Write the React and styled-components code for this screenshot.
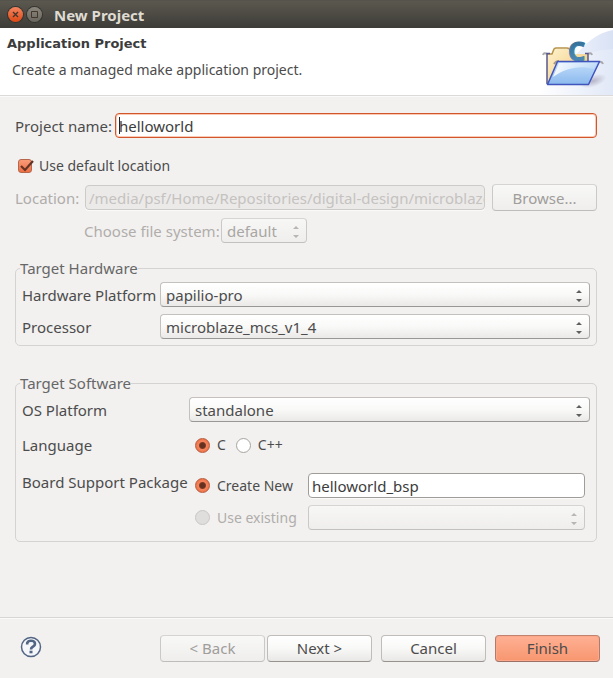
import React, { useState } from "react";
import styled, { createGlobalStyle, css } from "styled-components";

const GlobalStyle = createGlobalStyle`
  * { box-sizing: border-box; }
  body {
    margin: 0;
    background: #f2f1f0;
    color: #4c4c4c;
    font: 15px/18px "Noto Sans", sans-serif;
  }
  button, input, select { font: inherit; color: inherit; margin: 0; }
`;

const Dialog = styled.form`
  display: flex;
  flex-direction: column;
  min-height: 100vh;
`;

const TitleBar = styled.header`
  display: flex;
  align-items: center;
  height: 28px;
  padding: 0 8px;
  gap: 4px;
  background: linear-gradient(#5b584f, #3d3c37);
  border-top: 1px solid #55534b;
`;

const WindowButton = styled.button`
  display: flex;
  width: 15px;
  height: 15px;
  padding: 0;
  align-items: center;
  justify-content: center;
  border: 0;
  border-radius: 50%;
  color: #45352b;
  background: ${(p) => (p.$close ? "linear-gradient(#f58560, #dd4814)" : "linear-gradient(#8a877d, #68665e)")};
  box-shadow: 0 0 0 1px #35342f;
`;

const WindowTitle = styled.h1`
  margin: 0 0 0 8px;
  font-size: 15px;
  line-height: 18px;
  font-weight: 700;
  color: #dfdbd2;
`;

const Banner = styled.section`
  display: flex;
  justify-content: space-between;
  height: 68px;
  background: #fff;
  border-bottom: 1px solid #dcdad8;
  box-shadow: 0 1px 0 #fafafa;
`;

const BannerText = styled.div`
  padding: 7px 0 0 7px;
`;

const BannerTitle = styled.h2`
  margin: 0;
  font: 700 13px/18px "DejaVu Sans", sans-serif;
  color: #3c3c3c;
`;

const BannerMessage = styled.p`
  margin: 8px 0 0 5px;
  font-size: 14px;
`;

const Content = styled.main`
  flex: 1;
  padding: 17px 16px 0 15px;
`;

const Row = styled.div`
  display: grid;
  grid-template-columns: ${(p) => p.$columns};
  align-items: center;
  margin-top: ${(p) => p.$top || 0}px;
`;

const Label = styled.label`
  white-space: nowrap;
  color: ${(p) => (p.$disabled ? "#b0adaa" : "inherit")};
`;

const InputFrame = styled.div`
  position: relative;
  display: flex;
`;

const Caret = styled.span`
  position: absolute;
  left: 4px;
  top: 4px;
  width: 1px;
  height: 17px;
  background: #222;
`;

const TextInput = styled.input`
  width: 100%;
  min-width: 0;
  height: 25px;
  padding: 0 3px;
  border: 1px solid #a09d99;
  border-radius: 4px;
  background: #fff;
  outline: 0;
  color: #3c3c3c;
  box-shadow: 0 1px 0 #fafafa;
  ${(p) => p.$active && css`
    border-color: #d2562c;
    box-shadow: inset 0 0 0 1px #fbc9b4;
  `}
  &:disabled {
    padding-right: 0;
    border-color: #cdcbc8;
    background: #ebeae9;
    color: #c5c2bf;
  }
`;

const SelectFrame = styled.div`
  position: relative;
  display: flex;
`;

const Select = styled.select`
  appearance: none;
  width: 100%;
  height: 25px;
  padding: 0 20px 0 5px;
  border: 1px solid #c3c0bd;
  border-bottom-color: #9a9794;
  border-right-color: #aba8a5;
  border-radius: 4px;
  background: linear-gradient(#fff, #f9f9f8 50%, #eae9e8);
  &:disabled {
    opacity: 1;
    color: #a9a6a3;
    border-color: #d6d4d2 #cbc9c7 #c3c1bf;
    background: linear-gradient(#f7f7f6, #efeeed);
  }
`;

const Arrows = styled.svg`
  position: absolute;
  right: 8px;
  top: 8px;
  pointer-events: none;
  fill: ${(p) => (p.$disabled ? "#b8b5b2" : "#5f5f5f")};
`;

const Button = styled.button`
  width: 105px;
  height: 27px;
  padding: 0;
  border: 1px solid #bfbcb9;
  border-bottom-color: #96938f;
  border-radius: 4px;
  background: linear-gradient(#fff, #f8f8f7 50%, #e9e8e7);
  ${(p) => p.$primary && css`
    border-color: #c18370 #b27a68 #9a7164;
    background: linear-gradient(#ffb094, #f7966f);
    box-shadow: inset 0 0 0 1px #fda88b;
  `}
  &:disabled {
    color: #a09d9a;
    border-color: #d6d4d2 #cbc9c7 #bfbdbb;
    background: linear-gradient(#f8f8f7, #efeeed);
  }
`;

const LocationRow = styled(Row)`
  ${Button} {
    justify-self: end;
  }
`;

const FileSystemRow = styled(Row)`
  padding-left: 69px;
`;

const Choice = styled.label`
  display: flex;
  align-items: center;
  gap: 7px;
  font-size: 14px;
  white-space: nowrap;
  color: ${(p) => (p.$disabled ? "#b0adaa" : "inherit")};
`;

const CheckFrame = styled.span`
  position: relative;
  display: flex;
  margin-left: 3px;
`;

const Checkbox = styled.input`
  appearance: none;
  width: 14px;
  height: 14px;
  border: 1px solid #b5664b;
  border-radius: 3px;
  background: ${(p) => (p.checked ? "linear-gradient(#f99b78, #ee6f43)" : "#fff")};
`;

const Tick = styled.svg`
  position: absolute;
  left: 0;
  top: 0;
  pointer-events: none;
`;

const Radio = styled.input`
  appearance: none;
  width: 15px;
  height: 15px;
  border: 1px solid #a7a4a0;
  border-radius: 50%;
  background: #fff;
  &:checked {
    border-color: #b65a3b;
    background: radial-gradient(circle, #64301f 0 2px, #7c3b26 3px, #f5855c 4px, #ee7147 7px);
  }
  &:disabled {
    border-color: #c9c7c5;
    background: #dfdedd;
  }
`;

const Group = styled.fieldset`
  min-width: 0;
  margin: ${(p) => p.$top}px 0 0;
  padding: 5px 6px 6px 4px;
  border: 1px solid #d5d3d1;
  border-radius: 5px;
`;

const Legend = styled.legend`
  padding: 0;
  height: 18px;
  color: #676767;
`;

const GroupBody = styled.div`
  display: grid;
  gap: 7px;
  padding-left: 2px;
`;

const RadioSet = styled.div`
  display: flex;
  gap: 10px;
  padding-left: 6px;
`;

const PackageRow = styled.div`
  display: grid;
  grid-template-columns: 167px 1fr;
  align-items: start;
  padding: 12px 5px 5px 0;
`;

const PackageOptions = styled.div`
  display: grid;
  grid-template-columns: 113px 1fr;
  row-gap: 7px;
  align-items: center;
  padding-left: 6px;
`;

const RowTitle = styled.span`
  white-space: nowrap;
`;

const Footer = styled.footer`
  display: flex;
  align-items: center;
  height: 61px;
  padding: 0 13px 0 20px;
  border-top: 1px solid #d8d6d4;
  box-shadow: inset 0 1px 0 #fafafa;
`;

const HelpButton = styled.button`
  display: flex;
  margin-right: auto;
  padding: 0 0 2px;
  border: 0;
  background: none;
`;

const Actions = styled.div`
  display: flex;
  gap: 9px;
`;

const Pager = styled.div`
  display: flex;
  gap: 2px;
`;

function Dropdown({ id, value, disabled, label }) {
  return (
    <SelectFrame>
      <Select id={id} disabled={disabled} defaultValue={value} aria-label={label}>
        <option>{value}</option>
      </Select>
      <Arrows $disabled={disabled} width="6" height="12" viewBox="0 0 6 12" aria-hidden="true">
        <path d="M3 0 6 3H0zM3 12 0 9h6z" />
      </Arrows>
    </SelectFrame>
  );
}

function ProjectArt() {
  return (
    <svg width="75" height="67" viewBox="0 0 75 67" aria-hidden="true">
      <defs>
        <linearGradient id="sweep" x1="0" x2="1">
          <stop offset="0" stopColor="#fff" />
          <stop offset="1" stopColor="#d9e2f5" />
        </linearGradient>
        <linearGradient id="sweepLow" x1="0" x2="1">
          <stop offset="0" stopColor="#fff" />
          <stop offset="1" stopColor="#e1e8f7" />
        </linearGradient>
        <linearGradient id="back" x1="0" x2="1" y2="1">
          <stop offset="0" stopColor="#fff3cf" />
          <stop offset="1" stopColor="#edc16e" />
        </linearGradient>
        <linearGradient id="front" x1="0" x2="0" y2="1">
          <stop offset="0" stopColor="#c3defa" />
          <stop offset="1" stopColor="#8bb9ee" />
        </linearGradient>
        <linearGradient id="shine" x1="0" x2="1">
          <stop offset="0" stopColor="#fff" stopOpacity=".9" />
          <stop offset="1" stopColor="#fff" stopOpacity=".1" />
        </linearGradient>
        <radialGradient id="shade">
          <stop offset="0" stopColor="#6b6080" stopOpacity=".4" />
          <stop offset="1" stopColor="#6b6080" stopOpacity="0" />
        </radialGradient>
        <linearGradient id="letter" x1="0" x2="0" y2="1">
          <stop offset="0" stopColor="#28668f" />
          <stop offset="1" stopColor="#5793bd" />
        </linearGradient>
      </defs>
      <path d="M0 67C30 45 42 8 75 2v65z" fill="url(#sweep)" />
      <path d="M0 67C25 30 50 23 75 21v46z" fill="url(#sweepLow)" />
      <ellipse cx="55" cy="53" rx="14" ry="6" fill="url(#shade)" transform="rotate(-18 55 53)" />
      <path d="M5 27q1-3 4-1M50 26q3-2 4 1M61 34q3-1 4 2" fill="none" stroke="#aaa9ad" strokeWidth="2" />
      <path d="M9 57V26h5l2-5h14l2 5h18v31z" fill="url(#back)" />
      <path d="M9 26h5l2-5q1-1 2-1h11q2 0 3 2l1 3" fill="none" stroke="#b69347" strokeWidth="1.5" />
      <path d="M9 56V25.500h3M47 25.500h3V34" fill="none" stroke="#58588f" strokeWidth="1.5" />
      <path d="M16 36q2-3 5-3" fill="none" stroke="#a69a87" strokeWidth="2" />
      <text x="30" y="33" fontFamily="Noto Sans" fontSize="27" fontWeight="700" fill="url(#letter)" stroke="url(#letter)" strokeWidth="1">C</text>
      <path d="M19.500 33.500h42L50.500 56.500h-41z" fill="url(#front)" stroke="#4054bd" strokeWidth="1.500" strokeLinejoin="round" />
      <path d="M21 35h38l-3 6C41 37 28 40 15 49z" fill="url(#shine)" />
    </svg>
  );
}

export default function App() {
  const [useDefault, setUseDefault] = useState(true);
  return (
    <>
      <GlobalStyle />
      <Dialog onSubmit={(e) => e.preventDefault()}>
        <TitleBar>
          <WindowButton type="button" $close aria-label="Close">
            <svg width="7" height="7" viewBox="0 0 7 7" stroke="currentColor" strokeWidth="1.4"><path d="m1 1 5 5M6 1 1 6" /></svg>
          </WindowButton>
          <WindowButton type="button" aria-label="Maximize">
            <svg width="7" height="7" viewBox="0 0 7 7" fill="none" stroke="currentColor"><path d="M.5.5h6v6h-6z" /></svg>
          </WindowButton>
          <WindowTitle>New Project</WindowTitle>
        </TitleBar>
        <Banner>
          <BannerText>
            <BannerTitle>Application Project</BannerTitle>
            <BannerMessage>Create a managed make application project.</BannerMessage>
          </BannerText>
          <ProjectArt />
        </Banner>
        <Content>
          <Row $columns="100px 1fr">
            <Label htmlFor="name">Project name:</Label>
            <InputFrame>
              <TextInput id="name" $active defaultValue="helloworld" />
              <Caret />
            </InputFrame>
          </Row>
          <Row $columns="1fr" $top={19}>
            <Choice>
              <CheckFrame>
                <Checkbox type="checkbox" checked={useDefault} onChange={(e) => setUseDefault(e.target.checked)} />
                {useDefault && (
                  <Tick width="16" height="15" viewBox="0 0 16 15" fill="none" stroke="#633425" strokeWidth="2.2">
                    <path d="m3 7 4 4 8-9" />
                  </Tick>
                )}
              </CheckFrame>
              Use default location
            </Choice>
          </Row>
          <LocationRow $columns="70px 1fr 112px" $top={9}>
            <Label htmlFor="location" $disabled>Location:</Label>
            <TextInput id="location" disabled defaultValue="/media/psf/Home/Repositories/digital-design/microblaze" />
            <Button type="button" disabled>Browse...</Button>
          </LocationRow>
          <FileSystemRow $columns="137px 86px" $top={7}>
            <Label htmlFor="filesystem" $disabled>Choose file system:</Label>
            <Dropdown id="filesystem" value="default" disabled />
          </FileSystemRow>
          <Group $top={16}>
            <Legend>Target Hardware</Legend>
            <GroupBody>
              <Row $columns="138px 1fr">
                <Label htmlFor="hardware">Hardware Platform</Label>
                <Dropdown id="hardware" value="papilio-pro" />
              </Row>
              <Row $columns="138px 1fr">
                <Label htmlFor="processor">Processor</Label>
                <Dropdown id="processor" value="microblaze_mcs_v1_4" />
              </Row>
            </GroupBody>
          </Group>
          <Group $top={28}>
            <Legend>Target Software</Legend>
            <GroupBody>
              <Row $columns="167px 1fr">
                <Label htmlFor="os">OS Platform</Label>
                <Dropdown id="os" value="standalone" />
              </Row>
              <Row $columns="167px 1fr" $top={7} role="radiogroup" aria-labelledby="language">
                <RowTitle id="language">Language</RowTitle>
                <RadioSet>
                  <Choice><Radio type="radio" name="language" defaultChecked />C</Choice>
                  <Choice><Radio type="radio" name="language" />C++</Choice>
                </RadioSet>
              </Row>
              <PackageRow role="radiogroup" aria-labelledby="package">
                <RowTitle id="package">Board Support Package</RowTitle>
                <PackageOptions>
                  <Choice><Radio type="radio" name="package" defaultChecked />Create New</Choice>
                  <TextInput aria-label="New package name" defaultValue="helloworld_bsp" />
                  <Choice $disabled><Radio type="radio" name="package" disabled />Use existing</Choice>
                  <Dropdown label="Existing package" value="" disabled />
                </PackageOptions>
              </PackageRow>
            </GroupBody>
          </Group>
        </Content>
        <Footer>
          <HelpButton type="button" aria-label="Help">
            <svg width="22" height="22" viewBox="0 0 22 22" fill="none" stroke="#536584">
              <circle cx="11" cy="11" r="9.5" strokeWidth="1.5" fill="#f5f6fa" />
              <path d="M7.200 8.500V7Q8 4.800 11 4.800c5 0 5 4.600 1.500 6.200q-1.500.8-1.500 2.500" strokeWidth="2.600" />
              <path d="M9.500 16h3" strokeWidth="2.600" />
            </svg>
          </HelpButton>
          <Actions>
            <Pager>
              <Button type="button" disabled>&lt; Back</Button>
              <Button type="button">Next &gt;</Button>
            </Pager>
            <Button type="button">Cancel</Button>
            <Button type="submit" $primary>Finish</Button>
          </Actions>
        </Footer>
      </Dialog>
    </>
  );
}
